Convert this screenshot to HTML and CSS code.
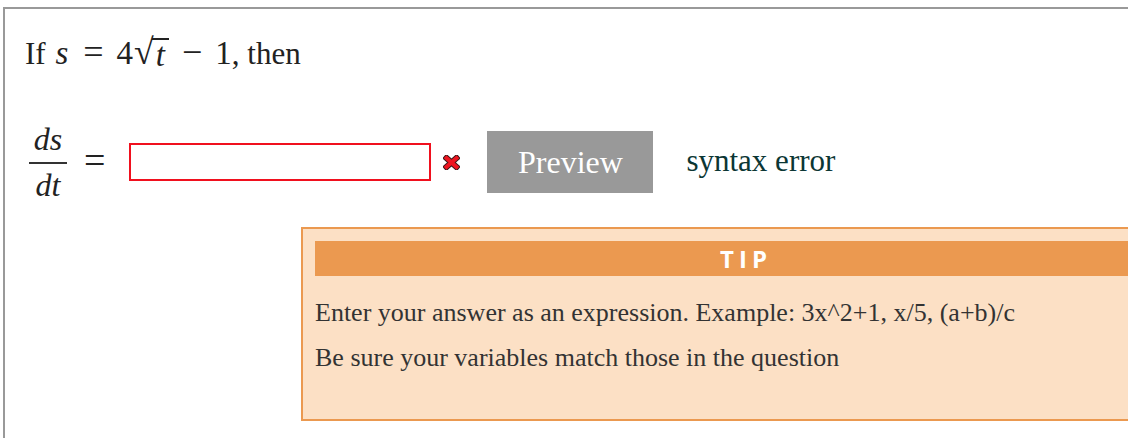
FILE: index.html
```html
<!DOCTYPE html>
<html>
<head>
<meta charset="utf-8">
<link rel="stylesheet" href="styles.css">
</head>
<body>
<div class="panel">
  <p class="question">If <span class="mi">s</span><span class="mo">=</span><span class="mn">4</span><span class="sqrt"><span class="radical">√</span><span class="radicand"><span class="mi">t</span></span></span><span class="mo">−</span><span class="mn">1</span>, then</p>
  <div class="answer-row">
    <span class="frac"><span class="num">ds</span><span class="den">dt</span></span>
    <span class="eq">=</span>
    <input class="answer-input" type="text">
    <svg class="err-icon" width="17" height="15" viewBox="0 0 17 15"><g stroke-linecap="square"><path d="M3.5 3 L13.5 12 M13.5 3 L3.5 12" stroke="#3a1a1a" stroke-width="6"/><path d="M3.5 3 L13.5 12 M13.5 3 L3.5 12" stroke="#ee1520" stroke-width="4"/></g></svg>
    <button class="preview-btn">Preview</button>
    <span class="status">syntax error</span>
  </div>
  <div class="tip">
    <div class="tip-head">TIP</div>
    <p class="tip-text">Enter your answer as an expression. Example: 3x^2+1, x/5, (a+b)/c</p>
    <p class="tip-text">Be sure your variables match those in the question</p>
  </div>
</div>
</body>
</html>
```
FILE: styles.css
```css
html, body {
  margin: 0;
  padding: 0;
  background: #fff;
  overflow: hidden;
}
body {
  width: 1128px;
  height: 438px;
  font-family: "Liberation Serif", "Times New Roman", serif;
  color: #222;
}
.panel {
  margin: 7px 0 0 3px;
  width: 1400px;
  height: 600px;
  border-top: 2px solid #999;
  border-left: 2px solid #999;
  padding: 25px 0 0 20px;
  box-sizing: border-box;
}
.question {
  margin: 0;
  font-size: 31px;
  line-height: 37px;
  height: 37px;
  white-space: nowrap;
}
.mi {
  font-style: italic;
  font-size: 33px;
  padding: 0 2px 0 2px;
}
.mn {
  font-size: 33px;
}
.mo {
  font-size: 36px;
  padding: 0 13px;
}
.sqrt {
  display: inline-flex;
  align-items: flex-start;
}
.radical {
  font-size: 36px;
  line-height: 37px;
  margin-right: -2px;
  margin-left: 1px;
}
.radicand {
  border-top: 2px solid #222;
  margin-top: 4px;
  line-height: 31px;
  padding: 0 2px 0 2px;
}
.answer-row {
  display: flex;
  align-items: center;
  margin-top: 60px;
  height: 62px;
}
.frac {
  display: inline-flex;
  flex-direction: column;
  align-items: center;
  margin-left: 4px;
  font-style: italic;
  font-size: 32px;
  padding: 0 0;
}
.num {
  line-height: 16px;
  padding-bottom: 15px;
  border-bottom: 2px solid #333;
  width: 38px;
  text-align: center;
}
.den {
  line-height: 16px;
  padding-top: 13px;
  text-align: center;
}
.eq {
  font-size: 38px;
  margin-left: 17px;
  margin-bottom: 4px;
}
.answer-input {
  margin-left: 24px;
  width: 302px;
  height: 38px;
  box-sizing: border-box;
  border: 2px solid #f0101e;
  padding: 0;
  background: #fff;
  outline: none;
}
.err-icon {
  margin-left: 12px;
}
.preview-btn {
  margin-left: 27px;
  width: 166px;
  height: 62px;
  border: none;
  background: #999;
  color: #fff;
  font-family: "Liberation Serif", "Times New Roman", serif;
  font-size: 32px;
  padding: 0;
}
.status {
  margin-left: 33px;
  font-size: 31px;
  color: #0b3634;
  margin-bottom: 2px;
}
.tip {
  margin: 34px 0 0 276px;
  width: 890px;
  height: 194px;
  box-sizing: border-box;
  background: #fce0c5;
  border: 2px solid #eb9950;
  padding: 12px;
}
.tip-head {
  height: 35px;
  background: #eb9950;
  color: #fff;
  font-family: "Open Sans", "DejaVu Sans", sans-serif;
  font-weight: 700;
  font-size: 24px;
  line-height: 35px;
  letter-spacing: 5px;
  text-align: center;
}
.tip-text {
  margin: 22px 0 0 0;
  font-size: 26px;
  line-height: 30px;
  color: #333;
}
.tip-text + .tip-text {
  margin-top: 15px;
}
```
